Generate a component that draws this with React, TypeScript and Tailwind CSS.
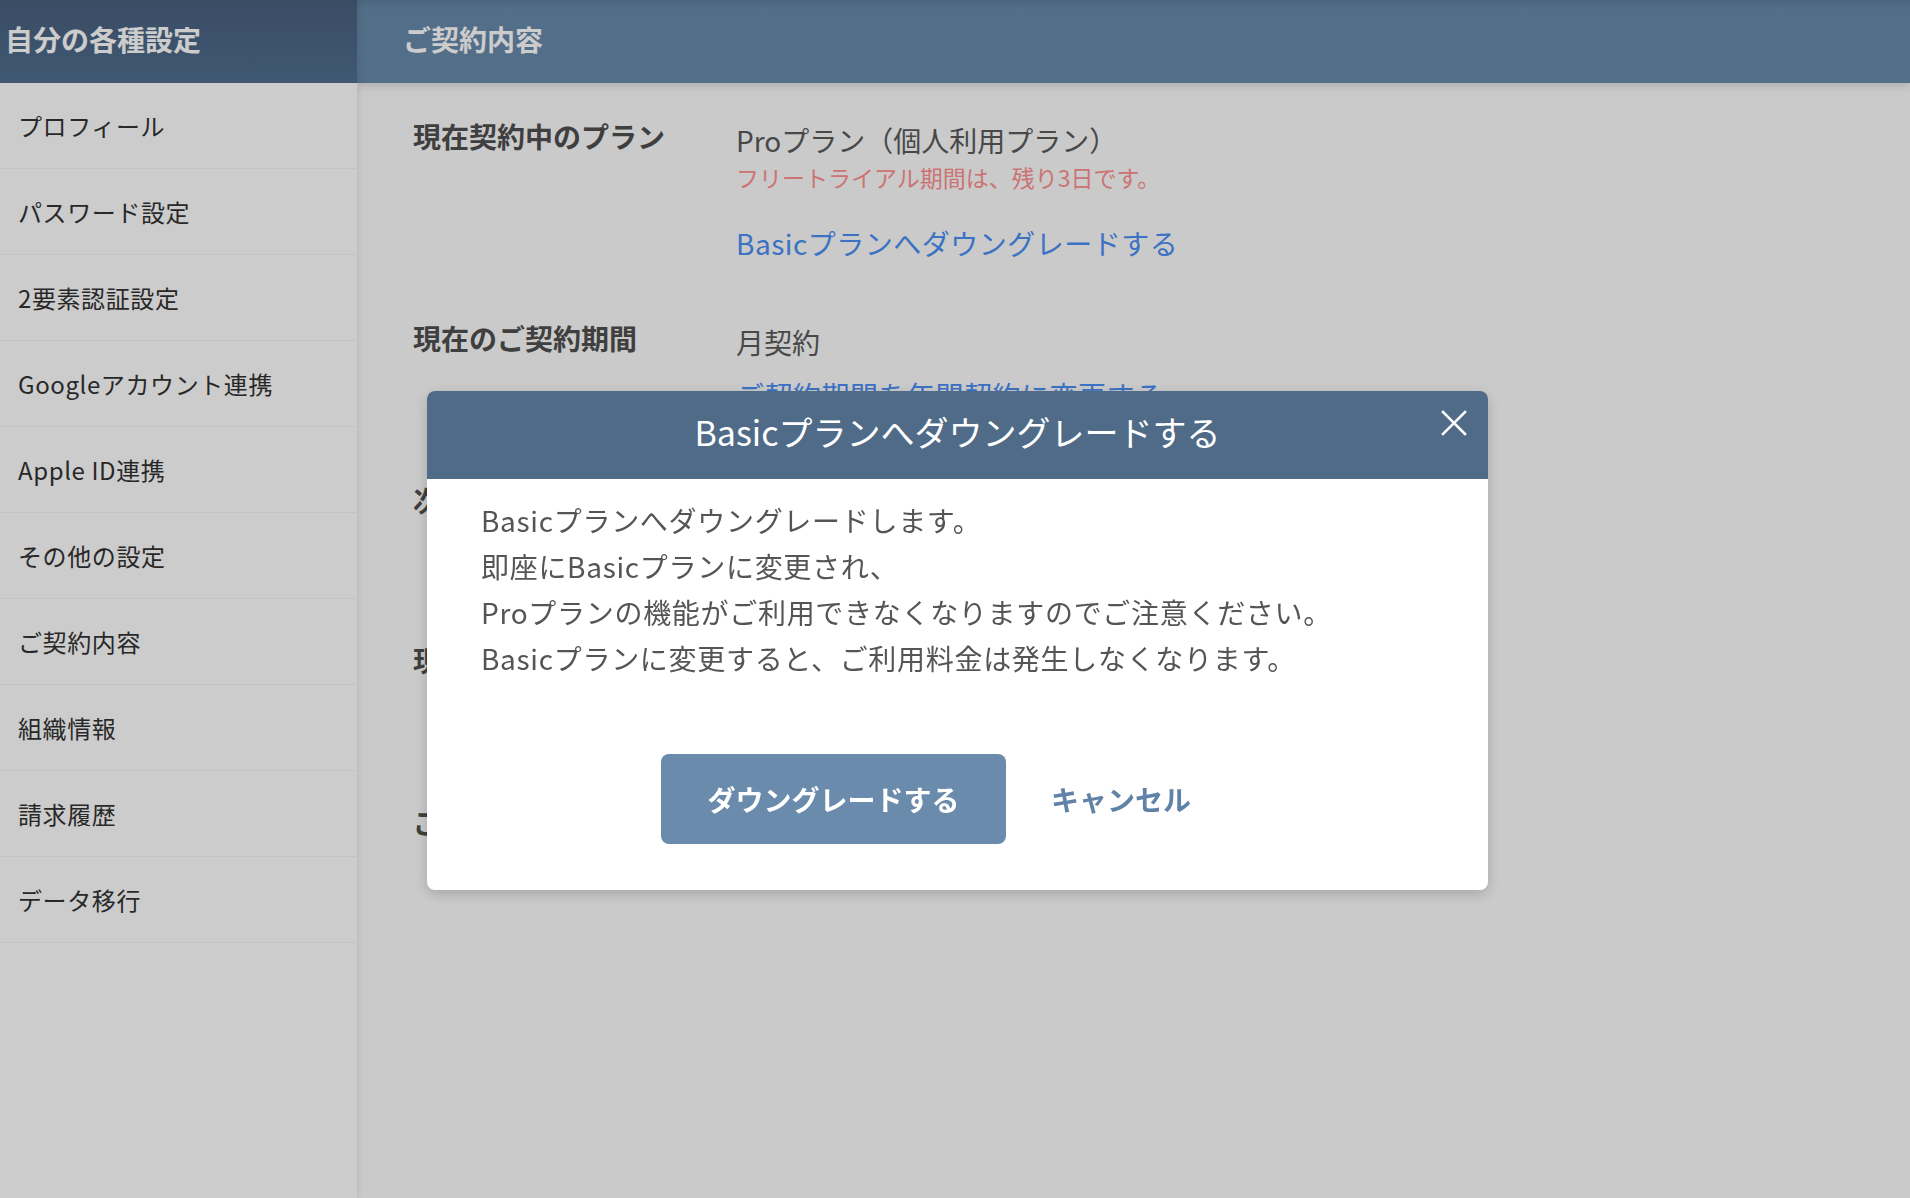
import React from "react";

const font = { fontFamily: '"Noto Sans CJK JP", "Noto Sans", sans-serif' };

const menu = [
  "プロフィール",
  "パスワード設定",
  "2要素認証設定",
  "Googleアカウント連携",
  "Apple ID連携",
  "その他の設定",
  "ご契約内容",
  "組織情報",
  "請求履歴",
  "データ移行",
];

function Sidebar() {
  return (
    <aside className="relative z-[1] flex w-[357px] shrink-0 flex-col bg-white shadow-[2px_0_6px_rgba(0,0,0,0.08)]">
      <div className="flex h-[83px] items-center bg-gradient-to-b from-[#48607e] to-[#506e90] pb-[6px] pl-[5px]">
        <h1 className="text-[28px] font-bold leading-none text-white">自分の各種設定</h1>
      </div>
      <ul>
        {menu.map((label) => (
          <li
            key={label}
            className="flex h-[86px] items-center border-b border-[#f4f4f4] pl-[18px] text-[24px] tracking-[0.6px] text-[#333]"
          >
            {label}
          </li>
        ))}
      </ul>
    </aside>
  );
}

type Row = { label: string; top: string; children?: React.ReactNode };

function ContractRow({ label, top, children }: Row) {
  return (
    <div className={`flex ${top}`}>
      <div className="w-[323px] shrink-0 text-[28px] font-bold leading-[40px] text-[#4f4f4f]">{label}</div>
      <div className="flex flex-col pt-[4px] text-[#5a5a5a]">{children}</div>
    </div>
  );
}

function Content() {
  return (
    <main className="flex flex-1 flex-col bg-[#fdfdfd]">
      <div className="relative flex h-[83px] items-center bg-gradient-to-b from-[#5f7f9f] to-[#688aab] to-[12%] pb-[6px] pl-[46px] shadow-[0_4px_8px_rgba(0,0,0,0.12)]">
        <h2 className="text-[28px] font-bold leading-none text-white">ご契約内容</h2>
      </div>
      <div className="flex flex-col pl-[56px]">
        <ContractRow label="現在契約中のプラン" top="mt-[33px]">
          <span className="text-[28px] leading-[40px]">Proプラン（個人利用プラン）</span>
          <span className="text-[23px] leading-[34px] text-[#ff9191]">フリートライアル期間は、残り3日です。</span>
          <a className="mt-[29px] text-[28px] leading-[40px] tracking-[0.5px] text-[#4b8ff5]">
            Basicプランへダウングレードする
          </a>
        </ContractRow>
        <ContractRow label="現在のご契約期間" top="mt-[55px]">
          <span className="text-[28px] leading-[40px]">月契約</span>
          <a className="mt-[13px] text-[28px] leading-[40px] tracking-[0.5px] text-[#4b8ff5]">
            ご契約期間を年間契約に変更する
          </a>
        </ContractRow>
        <ContractRow label="次回更新日" top="mt-[65px]">
          <span className="text-[28px] leading-[40px]">2024年5月1日</span>
        </ContractRow>
        <ContractRow label="現在のお支払い方法" top="mt-[116px]">
          <span className="text-[28px] leading-[40px]">クレジットカード</span>
        </ContractRow>
        <ContractRow label="ご請求先" top="mt-[118px]">
          <span className="text-[28px] leading-[40px]">-</span>
        </ContractRow>
      </div>
    </main>
  );
}

function CloseIcon() {
  return (
    <svg width="26" height="26" viewBox="0 0 26 26" fill="none" stroke="white" strokeWidth="2.6" strokeLinecap="square">
      <path d="M2 2 L24 24 M24 2 L2 24" />
    </svg>
  );
}

function DowngradeModal() {
  return (
    <div className="fixed inset-0 z-10 flex items-start justify-center bg-black/20 pl-[5px] pt-[391px]">
      <div className="w-[1061px] overflow-hidden rounded-[8px] bg-white shadow-[0_4px_14px_rgba(0,0,0,0.18)]">
        <div className="relative flex h-[88px] items-center justify-center bg-[#4f6b88] pb-[6px]">
          <h3 className="text-[34px] leading-none text-white">Basicプランへダウングレードする</h3>
          <button className="absolute right-[21px] top-[19px]">
            <CloseIcon />
          </button>
        </div>
        <div className="px-[54px] pb-[46px] pt-[18px]">
          <div className="text-[28px] leading-[46px] tracking-[0.7px] text-[#555]">
            <p>Basicプランへダウングレードします。</p>
            <p>即座にBasicプランに変更され、</p>
            <p>Proプランの機能がご利用できなくなりますのでご注意ください。</p>
            <p>Basicプランに変更すると、ご利用料金は発生しなくなります。</p>
          </div>
          <div className="mt-[73px] flex items-center gap-[45px] pl-[180px]">
            <button className="h-[90px] w-[345px] rounded-[8px] bg-[#6a8bab] text-[28px] font-bold text-white">
              ダウングレードする
            </button>
            <button className="text-[28px] font-bold text-[#5f82a6]">キャンセル</button>
          </div>
        </div>
      </div>
    </div>
  );
}

export default function App() {
  return (
    <div className="flex h-screen overflow-hidden" style={font}>
      <Sidebar />
      <Content />
      <DowngradeModal />
    </div>
  );
}
